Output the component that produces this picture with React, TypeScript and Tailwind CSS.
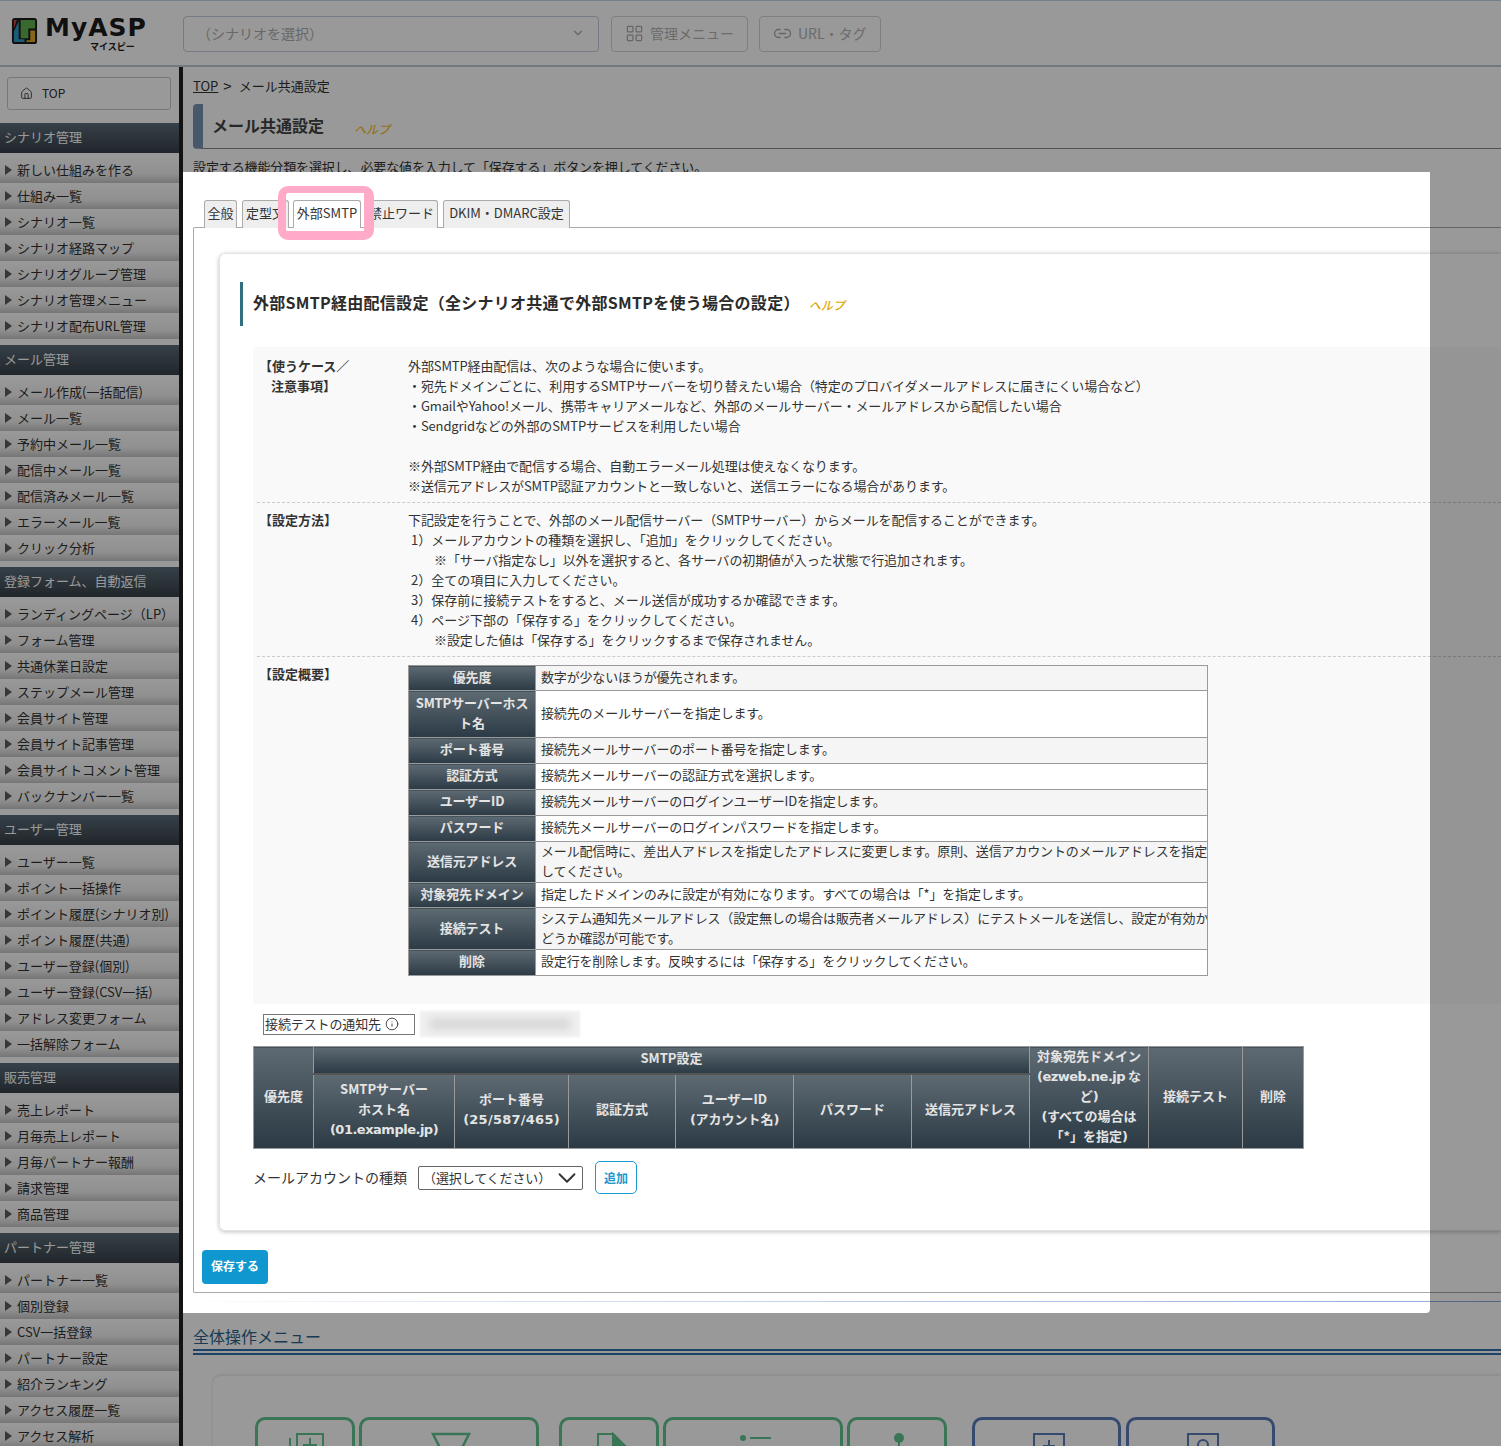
import { ChevronDown, House, Info, LayoutGrid, Link2 } from "lucide-react";
import type { ReactNode } from "react";

const groups = [
	{
		title: "シナリオ管理",
		items: ["新しい仕組みを作る", "仕組み一覧", "シナリオ一覧", "シナリオ経路マップ", "シナリオグループ管理", "シナリオ管理メニュー", "シナリオ配布URL管理"],
	},
	{
		title: "メール管理",
		items: ["メール作成(一括配信)", "メール一覧", "予約中メール一覧", "配信中メール一覧", "配信済みメール一覧", "エラーメール一覧", "クリック分析"],
	},
	{
		title: "登録フォーム、自動返信",
		items: ["ランディングページ（LP）", "フォーム管理", "共通休業日設定", "ステップメール管理", "会員サイト管理", "会員サイト記事管理", "会員サイトコメント管理", "バックナンバー一覧"],
	},
	{
		title: "ユーザー管理",
		items: ["ユーザー一覧", "ポイント一括操作", "ポイント履歴(シナリオ別)", "ポイント履歴(共通)", "ユーザー登録(個別)", "ユーザー登録(CSV一括)", "アドレス変更フォーム", "一括解除フォーム"],
	},
	{
		title: "販売管理",
		items: ["売上レポート", "月毎売上レポート", "月毎パートナー報酬", "請求管理", "商品管理"],
	},
	{
		title: "パートナー管理",
		items: ["パートナー一覧", "個別登録", "CSV一括登録", "パートナー設定", "紹介ランキング", "アクセス履歴一覧", "アクセス解析"],
	},
];

const summaryRows = [
	{ h: "h-[25px]", up: "-mt-[2px]", th: ["優先度"], td: ["数字が少ないほうが優先されます。"] },
	{ h: "h-[47px]", up: "-mt-[2px]", th: ["SMTPサーバーホス", "ト名"], td: ["接続先のメールサーバーを指定します。"] },
	{ h: "h-[26px]", up: "-mt-[4px]", th: ["ポート番号"], td: ["接続先メールサーバーのポート番号を指定します。"] },
	{ h: "h-[26px]", up: "-mt-[4px]", th: ["認証方式"], td: ["接続先メールサーバーの認証方式を選択します。"] },
	{ h: "h-[26px]", up: "-mt-[4px]", th: ["ユーザーID"], td: ["接続先メールサーバーのログインユーザーIDを指定します。"] },
	{ h: "h-[26px]", up: "-mt-[4px]", th: ["パスワード"], td: ["接続先メールサーバーのログインパスワードを指定します。"] },
	{ h: "h-[41px]", up: "-mt-[2px]", th: ["送信元アドレス"], td: ["メール配信時に、差出人アドレスを指定したアドレスに変更します。原則、送信アカウントのメールアドレスを指定", "してください。"] },
	{ h: "h-[25px]", up: "-mt-[2px]", th: ["対象宛先ドメイン"], td: ["指定したドメインのみに設定が有効になります。すべての場合は「*」を指定します。"] },
	{ h: "h-[42px]", up: "-mt-[2px]", th: ["接続テスト"], td: ["システム通知先メールアドレス（設定無しの場合は販売者メールアドレス）にテストメールを送信し、設定が有効か", "どうか確認が可能です。"] },
	{ h: "h-[26px]", up: "-mt-[4px]", th: ["削除"], td: ["設定行を削除します。反映するには「保存する」をクリックしてください。"] },
];

const thClass =
	"border border-[#9a9a9a] bg-[linear-gradient(#5e6a72,#2b3a45)] text-[#e4e4e4] font-bold text-center align-middle p-0";

function Lines({ rows, up = "-mt-[2px]" }: { rows: ReactNode[]; up?: string }) {
	return (
		<div className={up}>
			{rows.map((r, i) => (
				<div key={i}>{r}</div>
			))}
		</div>
	);
}

// latin part of the header cells, the reference uses a wider bold face there
function Wide({ children, digits }: { children: ReactNode; digits?: boolean }) {
	return (
		<span className={"font-['DejaVu_Sans',sans-serif] leading-none " + (digits ? "tracking-[0.25px]" : "tracking-[-0.5px]")}>
			{children}
		</span>
	);
}

function Sidebar() {
	return (
		<aside className="w-[183px] shrink-0 border-r-4 border-[#202020] pt-[10px] h-[1379px] text-[#303030]">
			<div className="mx-[7px] mr-[8px] h-[33px] pb-[1px] border border-[#c8c8c8] rounded-[3px] flex items-center pl-[12px] gap-[9px] text-[12px]">
				<House size={13} strokeWidth={1.5} />
				<span>TOP</span>
			</div>
			<div className="mt-[13px]">
				{groups.map((g) => (
					<div key={g.title} className="mb-[6px]">
						<div className="h-[30px] pb-[2px] pl-[4px] flex items-center text-[13px] text-white bg-[linear-gradient(#5c6d7a,#363f47)]">
							{g.title}
						</div>
						<ul className="pt-[4px]">
							{g.items.map((item) => (
								<li
									key={item}
									className="h-[26px] flex items-center pl-[5px] gap-[5px] text-[13px] whitespace-nowrap bg-[linear-gradient(#ffffff,#f0f0f0_65%,#c4c4c4)]"
								>
									<span className="w-0 h-0 border-y-[5px] border-l-[7px] border-y-transparent border-l-[#5c5c5c]" />
									<span>{item}</span>
								</li>
							))}
						</ul>
					</div>
				))}
			</div>
		</aside>
	);
}

function Header() {
	return (
		<header className="h-[67px] pt-[2px] border-t border-b-2 border-t-[#c4d4ea] border-b-[#bcc8d8] flex items-center">
			<div className="w-[183px] shrink-0 flex items-center pl-[11px] relative h-full">
				<svg width="27" height="28" viewBox="0 0 28 29" className="-mt-[6px]">
					<rect x="1" y="1" width="26" height="27" rx="3" fill="#1c1c1c" />
					<path d="M3 3h3L3 12z" fill="#d8433f" />
					<path d="M3 15 8 4v19h6v3H4q-1 0-1-1z" fill="#2d9bc4" />
					<path d="M10 3h15v9h-7v10h-8z" fill="#5fb04e" />
					<path d="M20 14h5v11q0 1-1 1h-8v-2h4z" fill="#e0a92e" />
				</svg>
				<span className="ml-[7px] -mt-[12px] text-[25px] leading-[28px] h-[28px] font-bold text-[#1c1c1c] font-['DejaVu_Sans',sans-serif] tracking-[1px]">
					MyASP
				</span>
				<span className="absolute left-[90px] top-[39px] text-[9px] leading-[10px] font-bold text-[#1c1c1c]">
					マイスピー
				</span>
			</div>
			<div className="w-[416px] h-[36px] pb-[2px] border border-[#c2cede] rounded-[4px] flex items-center justify-between pl-[13px] pr-[13px] text-[14px] text-[#aeaeae]">
				<span>（シナリオを選択）</span>
				<ChevronDown size={14} className="text-[#aaa]" />
			</div>
			<div className="ml-[12px] w-[137px] h-[36px] pb-[2px] border border-[#d0d4da] rounded-[4px] flex items-center pl-[13px] gap-[6px] text-[14px] text-[#b4b4b4]">
				<LayoutGrid size={19} strokeWidth={1.5} className="text-[#aaa]" />
				<span>管理メニュー</span>
			</div>
			<div className="ml-[11px] w-[122px] h-[36px] pb-[2px] border border-[#d0d4da] rounded-[4px] flex items-center pl-[13px] gap-[6px] text-[14px] text-[#b4b4b4]">
				<Link2 size={19} strokeWidth={1.75} className="text-[#aaa]" />
				<span>URL・タグ</span>
			</div>
		</header>
	);
}

function SummaryTable() {
	return (
		<table className="w-[800px] table-fixed border-collapse text-[13px] leading-[20px]">
			<colgroup>
				<col className="w-[127px]" />
				<col />
			</colgroup>
			<tbody>
				{summaryRows.map((row, i) => (
					<tr key={i} className={row.h}>
						<th className={thClass}>
							<Lines rows={row.th} up={row.up} />
						</th>
						<td className={"border border-[#9a9a9a] p-0 pl-[5px] whitespace-nowrap overflow-hidden tracking-[-0.16px] " + (i % 2 === 0 ? "bg-[#f5f5f5]" : "bg-white")}>
							<Lines rows={row.td} up={row.up} />
						</td>
					</tr>
				))}
			</tbody>
		</table>
	);
}

function SmtpTable() {
	return (
		<table className="w-[1050px] table-fixed border-collapse text-[13px] leading-[20px]">
			<colgroup>
				<col className="w-[60px]" />
				<col className="w-[141px]" />
				<col className="w-[114px]" />
				<col className="w-[107px]" />
				<col className="w-[118px]" />
				<col className="w-[118px]" />
				<col className="w-[118px]" />
				<col className="w-[119px]" />
				<col className="w-[94px]" />
				<col className="w-[61px]" />
			</colgroup>
			<thead>
				<tr className="h-[27px]">
					<th rowSpan={2} className={thClass}><Lines rows={["優先度"]} up="-mt-[4px]" /></th>
					<th colSpan={6} className={thClass + " border-b-2 border-b-[#555]"}><Lines rows={["SMTP設定"]} up="-mt-[4px]" /></th>
					<th rowSpan={2} className={thClass}>
						<Lines rows={["対象宛先ドメイン", <><Wide>(ezweb.ne.jp</Wide> な</>, <>ど<Wide>)</Wide></>, <><Wide>(</Wide>すべての場合は</>, <>「*」を指定<Wide>)</Wide></>]} up="-mt-[3px]" />
					</th>
					<th rowSpan={2} className={thClass}><Lines rows={["接続テスト"]} up="-mt-[4px]" /></th>
					<th rowSpan={2} className={thClass}><Lines rows={["削除"]} up="-mt-[4px]" /></th>
				</tr>
				<tr className="h-[75px]">
					<th className={thClass}>
						<Lines rows={["SMTPサーバー", "ホスト名", <Wide>(01.example.jp)</Wide>]} up="-mt-[4px]" />
					</th>
					<th className={thClass}>
						<Lines rows={["ポート番号", <Wide digits>(25/587/465)</Wide>]} up="-mt-[4px]" />
					</th>
					<th className={thClass}><Lines rows={["認証方式"]} up="-mt-[4px]" /></th>
					<th className={thClass}>
						<Lines rows={["ユーザーID", <><Wide>(</Wide>アカウント名<Wide>)</Wide></>]} up="-mt-[4px]" />
					</th>
					<th className={thClass}><Lines rows={["パスワード"]} up="-mt-[4px]" /></th>
					<th className={thClass}><Lines rows={["送信元アドレス"]} up="-mt-[4px]" /></th>
				</tr>
			</thead>
		</table>
	);
}

function InfoSection() {
	return (
		<section className="ml-[33px] mt-[21px] bg-[#f9f9f9] pl-[4px] pb-[28px] text-[13px] leading-[20px] text-[#333] tracking-[-0.12px]">
			<div className="flex pt-[9px] pb-[6px] border-b border-dashed border-[#ccc]">
				<div className="w-[151px] shrink-0 pl-[2px] font-bold tracking-normal">
					<div>【使うケース／</div>
					<div className="pl-[12px]">注意事項】</div>
				</div>
				<div>
					<div>外部SMTP経由配信は、次のような場合に使います。</div>
					<div>・宛先ドメインごとに、利用するSMTPサーバーを切り替えたい場合（特定のプロバイダメールアドレスに届きにくい場合など）</div>
					<div>・GmailやYahoo!メール、携帯キャリアメールなど、外部のメールサーバー・メールアドレスから配信したい場合</div>
					<div>・Sendgridなどの外部のSMTPサービスを利用したい場合</div>
					<div className="h-[20px]" />
					<div>※外部SMTP経由で配信する場合、自動エラーメール処理は使えなくなります。</div>
					<div>※送信元アドレスがSMTP認証アカウントと一致しないと、送信エラーになる場合があります。</div>
				</div>
			</div>
			<div className="flex pt-[7px] pb-[6px] border-b border-dashed border-[#ccc]">
				<div className="w-[151px] shrink-0 pl-[2px] font-bold tracking-normal">【設定方法】</div>
				<div>
					<div>下記設定を行うことで、外部のメール配信サーバー（SMTPサーバー）からメールを配信することができます。</div>
					<div className="pl-[3px] tracking-normal">1）メールアカウントの種類を選択し、「追加」をクリックしてください。</div>
					<div className="pl-[26px]">※「サーバ指定なし」以外を選択すると、各サーバの初期値が入った状態で行追加されます。</div>
					<div className="pl-[3px] tracking-normal">2）全ての項目に入力してください。</div>
					<div className="pl-[3px] tracking-normal">3）保存前に接続テストをすると、メール送信が成功するか確認できます。</div>
					<div className="pl-[3px] tracking-normal">4）ページ下部の「保存する」をクリックしてください。</div>
					<div className="pl-[26px]">※設定した値は「保存する」をクリックするまで保存されません。</div>
				</div>
			</div>
			<div className="flex pt-[8px]">
				<div className="w-[151px] shrink-0 pl-[2px] font-bold tracking-normal -mt-px">【設定概要】</div>
				<SummaryTable />
			</div>
		</section>
	);
}

function SettingsCard() {
	return (
		<div className="ml-[25px] mt-[25px] h-[978px] border border-[#e4e4e4] border-r-0 rounded-l-[6px] shadow-[0_1px_4px_rgba(0,0,0,0.25)] pt-[28px] text-[#333]">
			<div className="ml-[20px] h-[44px] pb-[4px] border-l-[3px] border-[#2f6f80] pl-[10px] flex items-center">
				<h2 className="text-[16px] font-bold text-[#2b2b2b] tracking-[0.28px]">外部SMTP経由配信設定（全シナリオ共通で外部SMTPを使う場合の設定）</h2>
				<a className="ml-[9px] mt-[5px] text-[12px] font-medium text-[#e0a800] italic">ヘルプ</a>
			</div>
			<InfoSection />
			<div className="ml-[43px] mt-[9px] h-[22px] flex items-center text-[13px]">
				<div className="w-[152px] h-[21px] border border-[#777] flex items-center pl-px gap-[4px] whitespace-nowrap tracking-[-0.12px]">
					<span>接続テストの通知先</span>
					<Info size={14} strokeWidth={1.5} />
				</div>
				<div className="ml-[5px] w-[160px] h-[26px] bg-[#f0f0f0] blur-[1px] flex items-center justify-center">
					<div className="w-[140px] h-[10px] bg-[#d4d4d4] blur-[4px]" />
				</div>
			</div>
			<div className="ml-[33px] mt-[11px]">
				<SmtpTable />
			</div>
			<div className="ml-[33px] mt-[12px] flex items-center text-[14px]">
				<span>メールアカウントの種類</span>
				<div className="ml-[11px] w-[165px] h-[24px] border border-[#666] rounded-[2px] flex items-center justify-between pl-[4px] overflow-hidden">
					<span className="text-[13px] tracking-[-0.12px]">（選択してください）</span>
					<ChevronDown size={30} strokeWidth={1.5} className="shrink-0" />
				</div>
				<button className="ml-[12px] w-[42px] h-[33px] border border-[#1a9ad0] rounded-[5px] text-[#1a9ad0] text-[12px] font-bold">追加</button>
			</div>
		</div>
	);
}

function BottomIcon({ kind, color }: { kind: number; color: string }) {
	return (
		<svg width="60" height="30" viewBox="0 0 60 30" fill="none" stroke={color} strokeWidth="2">
			{kind === 0 && (
				<>
					<path d="M22 2h26v26H22z" />
					<path d="M15 6v22M35 6v16M28 13h14" />
				</>
			)}
			{kind === 1 && <path d="M14 2h36l-8 16H22z" strokeWidth="2.5" />}
			{kind === 2 && (
				<>
					<path d="M19 28V2h15l12 12v14" />
					<path d="M34 2l12 12H34z" fill={color} />
				</>
			)}
			{kind === 3 && (
				<>
					<circle cx="20" cy="6" r="3" fill={color} stroke="none" />
					<path d="M27 6h21" />
				</>
			)}
			{kind === 4 && (
				<>
					<circle cx="32" cy="6" r="5" fill={color} stroke="none" />
					<path d="M32 10v14" />
				</>
			)}
			{kind === 5 && (
				<>
					<path d="M17 2h30v26H17z" />
					<path d="M32 8v12M26 14h12" />
				</>
			)}
			{kind === 6 && (
				<>
					<path d="M17 2h30v26H17z" />
					<circle cx="32" cy="13" r="5" />
				</>
			)}
		</svg>
	);
}

function BottomMenu() {
	const green = "#62c48f";
	const blue = "#5a7ab8";
	const box = "h-[80px] border-[3px] rounded-t-[10px] flex justify-center pt-[12px]";
	return (
		<div className="ml-[30px] mt-[20px] h-[100px] rounded-l-[8px] bg-[#ffffff] border-t border-[#eee] shadow-[0_0_3px_rgba(0,0,0,0.15)] pl-[42px] pt-[41px] flex">
			<div className={box + " w-[100px] border-[#62c48f]"}><BottomIcon kind={0} color={green} /></div>
			<div className={box + " w-[180px] ml-[4px] border-[#62c48f]"}><BottomIcon kind={1} color={green} /></div>
			<div className={box + " w-[100px] ml-[20px] border-[#62c48f]"}><BottomIcon kind={2} color={green} /></div>
			<div className={box + " w-[180px] ml-[4px] border-[#62c48f]"}><BottomIcon kind={3} color={green} /></div>
			<div className={box + " w-[100px] ml-[4px] border-[#62c48f]"}><BottomIcon kind={4} color={green} /></div>
			<div className={box + " w-[149px] ml-[25px] border-[#5a7ab8]"}><BottomIcon kind={5} color={blue} /></div>
			<div className={box + " w-[149px] ml-[5px] border-[#5a7ab8]"}><BottomIcon kind={6} color={blue} /></div>
		</div>
	);
}

export default function App() {
	const tabClass =
		"h-[28px] pb-[3px] border border-b-0 border-[#aaa] rounded-t-[3px] bg-[#eee] flex items-center justify-center text-[13px] text-[#333] whitespace-nowrap overflow-hidden";

	return (
		<div className="relative w-[1501px] h-[1446px] overflow-hidden bg-white font-['Noto_Sans_CJK_JP','Noto_Sans',sans-serif] text-[#333]">
			<Header />
			<div className="flex">
				<Sidebar />
				<main className="flex-1 min-w-0">
					<div className="pl-[10px] h-[37px] flex items-center text-[13px]">
						<span className="underline">TOP</span>
						<span className="ml-[5px] text-[15px] leading-none">&gt;</span>
						<span className="ml-[7px]">メール共通設定</span>
					</div>
					<div className="ml-[10px] h-[45px] border-l-[10px] border-b border-[#7793b1] border-b-[#888] rounded-l-[4px] flex items-center pl-[9px] pb-[2px]">
						<h1 className="text-[16px] font-bold text-[#444]">メール共通設定</h1>
						<a className="ml-[30px] mt-[8px] text-[12px] font-medium text-[#f5c22e] italic">ヘルプ</a>
					</div>
					<p className="pl-[10px] mt-[8px] h-[15px] leading-[20px] text-[13px] tracking-[-0.12px]">
						設定する機能分類を選択し、必要な値を入力して「保存する」ボタンを押してください。
					</p>

					{/* white part that the tour spotlight shows */}
					<div className="relative bg-white pl-[10px] pt-[28px] pb-[12px]">
						<div className="flex ml-[11px] relative z-10 -mb-px">
							<div className={tabClass + " w-[33px]"}>全般</div>
							<div className={tabClass + " w-[47px] ml-[5px] !justify-start pl-[3px]"}>定型文</div>
							<div className={tabClass + " w-[68px] ml-[4px] !bg-white"}>外部SMTP</div>
							<div className={tabClass + " w-[73px] ml-[4px]"}>禁止ワード</div>
							<div className={tabClass + " w-[127px] ml-[5px]"}>DKIM・DMARC設定</div>
						</div>
						<div className="h-[1066px] border border-r-0 border-[#aaa] rounded-l-[2px] flex flex-col">
							<SettingsCard />
							<button className="ml-[8px] mt-[19px] w-[66px] h-[34px] pb-[2px] rounded-[4px] bg-[#1097d0] text-white text-[12px] font-bold">保存する</button>
						</div>
						<div className="mt-[8px] h-px -ml-[10px] bg-[linear-gradient(90deg,#ffffff,#dfe7f8_20%,#8fa8dd)]" />
						<div className="absolute left-[95px] top-[14px] w-[96px] h-[54px] border-t-[7px] border-b-[9px] border-l-[8px] border-r-[10px] border-[#ffaac8] rounded-[10px] z-20" />
					</div>

					<div className="ml-[10px] mt-[11px] text-[16px] leading-[22px] text-[#2a5f8c]">全体操作メニュー</div>
					<div className="ml-[10px] mt-[2px] h-[6px] border-y-2 border-[#2f6ea8]" />
					<BottomMenu />
				</main>
			</div>
			{/* spotlight: everything outside this box is dimmed */}
			<div className="absolute left-[183px] top-[172px] w-[1247px] h-[1141px] rounded-br-[4px] pointer-events-none shadow-[0_0_0_2000px_rgba(0,0,0,0.4)]" />
		</div>
	);
}
